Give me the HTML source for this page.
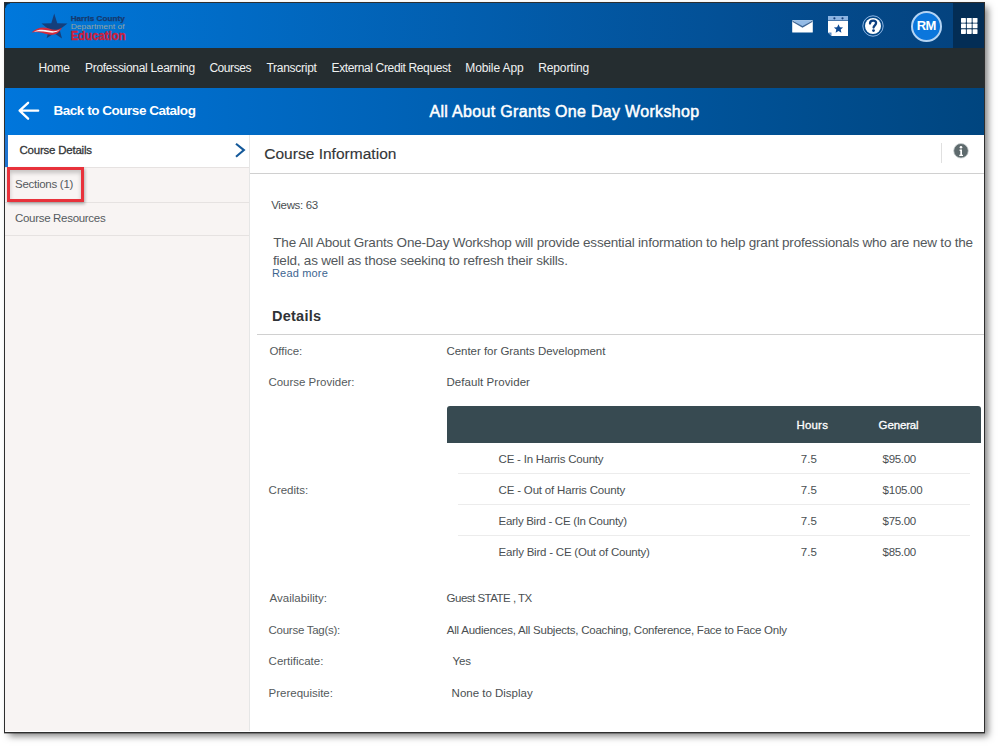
<!DOCTYPE html>
<html><head><meta charset="utf-8"><style>
html,body{margin:0;padding:0;}
body{width:999px;height:748px;overflow:hidden;background:#fff;position:relative;font-family:"Liberation Sans",sans-serif;}
.a{position:absolute;}
.t{position:absolute;white-space:nowrap;font-family:"Liberation Sans",sans-serif;}
</style></head><body>
<!-- frame shadow -->
<div class="a" style="left:4px;top:2px;width:981px;height:731px;box-shadow:4px 4px 7px -1px rgba(0,0,0,0.5);background:#fff"></div>
<!-- header -->
<div class="a" style="left:5px;top:3px;width:948px;height:45px;background:linear-gradient(90deg,#0078dc,#04437f)"></div>
<div class="a" style="left:953px;top:3px;width:31px;height:45px;background:#032d55"></div>
<div class="a" style="left:5px;top:3px;width:5px;height:5px;background:radial-gradient(circle at 100% 100%, rgba(0,0,0,0) 3.5px, rgba(10,20,30,0.75) 5px)"></div>
<!-- nav -->
<div class="a" style="left:5px;top:48px;width:979px;height:40px;background:#252d30"></div>
<!-- blue bar -->
<div class="a" style="left:5px;top:88px;width:979px;height:47px;background:linear-gradient(90deg,#0076dc,#00457f)"></div>
<!-- sidebar -->
<div class="a" style="left:5px;top:135px;width:244px;height:596px;background:#f8f4f3"></div>
<div class="a" style="left:5px;top:135px;width:244px;height:32px;background:#fff"></div>
<div class="a" style="left:5px;top:135px;width:3px;height:32px;background:#1f74d0"></div>
<div class="a" style="left:5px;top:167px;width:244px;height:1px;background:#e6e2e1"></div>
<div class="a" style="left:5px;top:202px;width:244px;height:1px;background:#e6e2e1"></div>
<div class="a" style="left:5px;top:235px;width:244px;height:1px;background:#e6e2e1"></div>
<div class="a" style="left:249px;top:135px;width:1px;height:596px;background:#e6e6e6"></div>
<!-- chevron -->
<svg class="a" style="left:232px;top:142px" width="16" height="18" viewBox="0 0 16 18"><path d="M4 1.7 L11.9 8.1 L4 14.7" fill="none" stroke="#14599a" stroke-width="2.1"/></svg>
<!-- red highlight box -->
<div class="a" style="left:7px;top:166.5px;width:70.5px;height:29.5px;border:3px solid #e8323b;box-shadow:1px 2px 3px rgba(0,0,0,0.3), inset 0 3px 4px rgba(0,0,0,0.2)"></div>
<!-- main header -->
<div class="a" style="left:250px;top:173px;width:734px;height:1px;background:#d0d0d0"></div>
<div class="a" style="left:941px;top:143px;width:1px;height:20px;background:#e0e0e0"></div>
<svg class="a" style="left:953px;top:143px" width="16" height="16" viewBox="0 0 16 16"><circle cx="8" cy="7.8" r="7.3" fill="#5e6a6d" stroke="#c9cfd0" stroke-width="0.8"/><circle cx="8" cy="4.3" r="1.3" fill="#fff"/><path d="M6.6 6.6h2.4v5.2h1v1.3H6.3v-1.3h1V7.9h-0.7z" fill="#fff"/></svg>
<!-- details line -->
<div class="a" style="left:257px;top:334px;width:727px;height:1px;background:#d0d0d0"></div>
<!-- table header -->
<div class="a" style="left:447px;top:406px;width:534px;height:37px;background:#374a51;border-radius:3px 3px 0 0"></div>
<div class="a" style="left:458px;top:473px;width:512px;height:1px;background:#ececec"></div>
<div class="a" style="left:458px;top:504px;width:512px;height:1px;background:#ececec"></div>
<div class="a" style="left:458px;top:535px;width:512px;height:1px;background:#ececec"></div>
<!-- paragraph line 2 clipped -->
<div class="a" style="left:273px;top:250px;width:700px;height:16px;overflow:hidden">
<div class="t" style="left:0px;top:4px;font-size:13.5px;line-height:13.5px;letter-spacing:-0.204px;color:#53585b">field, as well as those seeking to refresh their skills.</div>
</div>
<!-- frame border overlay -->
<div class="a" style="left:4px;top:2px;width:979px;height:729px;border:1px solid #2e2e2e;"></div><div class="a" style="left:5px;top:731px;width:979px;height:1px;background:#fff"></div><div class="a" style="left:4px;top:733px;width:981px;height:1px;background:rgba(40,40,40,0.35)"></div>
<!-- back arrow -->
<svg class="a" style="left:16px;top:100px" width="26" height="22" viewBox="0 0 26 22"><path d="M3.6 10.7 H22.2 M12.1 2.8 L3.6 10.7 L12.1 18.7" fill="none" stroke="#fff" stroke-width="2.3" stroke-linecap="round" stroke-linejoin="round"/></svg>
<!-- logo -->
<svg class="a" style="left:28px;top:10px" width="100" height="34" viewBox="0 0 100 34">
 <path d="M26.2 3.5 L29.3 13.2 L39.5 13.6 L31.6 19.6 L34 28.5 L26.2 23.3 L18.6 28.2 L21 19.6 L13.5 13.6 L23.3 13.2 Z" fill="#143f7c"/>
 <path d="M3.5 22.5 C9 17.5 15 16.5 21 18.5 C26 20.5 30 20.2 34 17.5 C31 23.5 27 25.5 21 24.5 C14 23 9 21 3.5 22.5 Z" fill="#d32a3c"/>
 <path d="M5.5 21.8 C10 19.3 15 19.2 20.5 20.6 C25.5 21.8 29 21.5 32 19.6 C29.5 22.4 26 23.2 20.5 22.3 C15 21.3 10 20.8 5.5 21.8 Z" fill="#f4f4f6"/>
 <text x="42.7" y="11" font-family="Liberation Sans" font-weight="700" font-size="7.6" fill="#163a70" stroke="#163a70" stroke-width="0.25" textLength="54" lengthAdjust="spacingAndGlyphs">Harris County</text>
 <text x="42.7" y="19.3" font-family="Liberation Sans" font-size="7.6" fill="#95a3a0" textLength="54" lengthAdjust="spacingAndGlyphs">Department of</text>
 <text x="42.7" y="30" font-family="Liberation Sans" font-weight="700" font-size="12" fill="#cc1f3c" stroke="#cc1f3c" stroke-width="0.45" textLength="55" lengthAdjust="spacingAndGlyphs">Education</text>
</svg>
<!-- envelope -->
<svg class="a" style="left:792px;top:19px" width="21" height="15" viewBox="0 0 21 15"><rect x="0.2" y="1.2" width="20.6" height="12.3" rx="0.6" fill="#fff"/><path d="M0.8 1.2 H20.2 L10.5 7.9 Z" fill="#94bbe6"/><path d="M0.6 2.2 L10.5 7.9 L20.4 2.2" fill="none" stroke="#3f6796" stroke-width="1.3"/></svg>
<!-- calendar -->
<svg class="a" style="left:828px;top:16px" width="21" height="20" viewBox="0 0 21 20"><path d="M0 0 H20 V20 H3.5 L0 16.5 Z" fill="#fff"/><rect x="0" y="0" width="20" height="4.2" fill="#8cb4e2"/><rect x="0" y="4" width="20" height="1" fill="#4a78ac"/><circle cx="6.4" cy="2.3" r="1.1" fill="#163f7a"/><circle cx="14.5" cy="2.3" r="1.1" fill="#163f7a"/><path d="M10.5 8.2 L11.9 11.2 L15.1 11.5 L12.7 13.6 L13.4 16.8 L10.5 15.1 L7.6 16.8 L8.3 13.6 L5.9 11.5 L9.1 11.2 Z" fill="#0d4a94"/><path d="M0 16.5 L3.5 20 L3.5 16.5 Z" fill="#5b8cc6"/></svg>
<!-- help -->
<svg class="a" style="left:862px;top:15px" width="22" height="22" viewBox="0 0 22 22"><circle cx="11" cy="11" r="10.2" fill="none" stroke="#8cb4e2" stroke-width="1"/><circle cx="11" cy="11" r="8" fill="#fff"/><path d="M8 8.6 C8 6.4 9.4 5.6 11.1 5.6 C12.9 5.6 14.1 6.6 14.1 8.1 C14.1 10.2 11.6 10.4 11.6 12.6" fill="none" stroke="#0d3f80" stroke-width="2.3" stroke-linecap="round"/><circle cx="11.5" cy="15.6" r="1.4" fill="#0d3f80"/></svg>
<!-- avatar -->
<div class="a" style="left:910.6px;top:10.8px;width:27.2px;height:27.2px;border-radius:50%;background:#0b76dc;border:2px solid #b4d4f4"></div>
<div class="t" style="left:916.7px;top:19px;font-weight:700;font-size:13px;line-height:13px;letter-spacing:-0.6px;color:#fff">RM</div>
<!-- grid -->
<svg class="a" style="left:961px;top:18px" width="17" height="16" viewBox="0 0 17 16"><g fill="#fff"><rect x="0" y="0" width="4.9" height="4.7" rx="0.6"/><rect x="5.8" y="0" width="4.9" height="4.7" rx="0.6"/><rect x="11.6" y="0" width="4.9" height="4.7" rx="0.6"/>
<rect x="0" y="5.6" width="4.9" height="4.7" rx="0.6"/><rect x="5.8" y="5.6" width="4.9" height="4.7" rx="0.6"/><rect x="11.6" y="5.6" width="4.9" height="4.7" rx="0.6"/>
<rect x="0" y="11.2" width="4.9" height="4.7" rx="0.6"/><rect x="5.8" y="11.2" width="4.9" height="4.7" rx="0.6"/><rect x="11.6" y="11.2" width="4.9" height="4.7" rx="0.6"/></g></svg>

<div class="t" style="left:38.50px;top:62.00px;font-weight:400;font-size:12px;line-height:12px;letter-spacing:-0.167px;color:#f0f2f2">Home</div>
<div class="t" style="left:85.00px;top:62.00px;font-weight:400;font-size:12px;line-height:12px;letter-spacing:-0.3px;color:#f0f2f2">Professional Learning</div>
<div class="t" style="left:209.40px;top:62.00px;font-weight:400;font-size:12px;line-height:12px;letter-spacing:-0.433px;color:#f0f2f2">Courses</div>
<div class="t" style="left:266.50px;top:62.00px;font-weight:400;font-size:12px;line-height:12px;letter-spacing:-0.278px;color:#f0f2f2">Transcript</div>
<div class="t" style="left:331.50px;top:62.00px;font-weight:400;font-size:12px;line-height:12px;letter-spacing:-0.359px;color:#f0f2f2">External Credit Request</div>
<div class="t" style="left:465.30px;top:62.00px;font-weight:400;font-size:12px;line-height:12px;letter-spacing:-0.111px;color:#f0f2f2">Mobile App</div>
<div class="t" style="left:538.20px;top:62.00px;font-weight:400;font-size:12px;line-height:12px;letter-spacing:-0.125px;color:#f0f2f2">Reporting</div>
<div class="t" style="left:53.50px;top:104.00px;font-weight:700;font-size:13.5px;line-height:13.5px;letter-spacing:-0.471px;color:#ffffff">Back to Course Catalog</div>
<div class="t" style="left:429.50px;top:104.00px;-webkit-text-stroke:0.5px #ffffff;font-weight:400;font-size:16px;line-height:16px;letter-spacing:0.319px;color:#ffffff">All About Grants One Day Workshop</div>
<div class="t" style="left:19.50px;top:145.00px;-webkit-text-stroke:0.3px #333638;font-weight:400;font-size:11.5px;line-height:11.5px;letter-spacing:-0.223px;color:#333638">Course Details</div>
<div class="t" style="left:15.00px;top:179.00px;font-weight:400;font-size:11.5px;line-height:11.5px;letter-spacing:-0.273px;color:#555a5e">Sections (1)</div>
<div class="t" style="left:15.00px;top:213.00px;font-weight:400;font-size:11.5px;line-height:11.5px;letter-spacing:-0.307px;color:#555a5e">Course Resources</div>
<div class="t" style="left:264.20px;top:146.00px;-webkit-text-stroke:0.15px #333638;font-weight:400;font-size:15.5px;line-height:15.5px;letter-spacing:0.024px;color:#333638">Course Information</div>
<div class="t" style="left:271.20px;top:200.00px;font-weight:400;font-size:11.5px;line-height:11.5px;letter-spacing:-0.325px;color:#4a4f52">Views: 63</div>
<div class="t" style="left:273.30px;top:236.00px;font-weight:400;font-size:13.5px;line-height:13.5px;letter-spacing:-0.204px;color:#53585b">The All About Grants One-Day Workshop will provide essential information to help grant professionals who are new to the</div>
<div class="t" style="left:272.00px;top:268.00px;font-weight:400;font-size:11px;line-height:11px;letter-spacing:0.175px;color:#3d6590">Read more</div>
<div class="t" style="left:272.00px;top:309.00px;font-weight:700;font-size:14.5px;line-height:14.5px;letter-spacing:0.25px;color:#2f3336">Details</div>
<div class="t" style="left:269.40px;top:346.00px;font-weight:400;font-size:11.5px;line-height:11.5px;letter-spacing:-0.017px;color:#555a5c">Office:</div>
<div class="t" style="left:446.40px;top:346.00px;font-weight:400;font-size:11.5px;line-height:11.5px;letter-spacing:-0.029px;color:#4a4f52">Center for Grants Development</div>
<div class="t" style="left:268.40px;top:377.00px;font-weight:400;font-size:11.5px;line-height:11.5px;letter-spacing:-0.007px;color:#555a5c">Course Provider:</div>
<div class="t" style="left:446.40px;top:377.00px;font-weight:400;font-size:11.5px;line-height:11.5px;letter-spacing:0.073px;color:#4a4f52">Default Provider</div>
<div class="t" style="left:268.60px;top:485.00px;font-weight:400;font-size:11.5px;line-height:11.5px;letter-spacing:-0.014px;color:#555a5c">Credits:</div>
<div class="t" style="left:269.60px;top:593.00px;font-weight:400;font-size:11.5px;line-height:11.5px;letter-spacing:0.0px;color:#555a5c">Availability:</div>
<div class="t" style="left:446.60px;top:593.00px;font-weight:400;font-size:11.5px;line-height:11.5px;letter-spacing:-0.507px;color:#4a4f52">Guest STATE , TX</div>
<div class="t" style="left:268.60px;top:625.00px;font-weight:400;font-size:11.5px;line-height:11.5px;letter-spacing:-0.277px;color:#555a5c">Course Tag(s):</div>
<div class="t" style="left:446.80px;top:625.00px;font-weight:400;font-size:11.5px;line-height:11.5px;letter-spacing:-0.236px;color:#4a4f52">All Audiences, All Subjects, Coaching, Conference, Face to Face Only</div>
<div class="t" style="left:268.60px;top:656.00px;font-weight:400;font-size:11.5px;line-height:11.5px;letter-spacing:-0.018px;color:#555a5c">Certificate:</div>
<div class="t" style="left:452.60px;top:656.00px;font-weight:400;font-size:11.5px;line-height:11.5px;letter-spacing:-0.15px;color:#4a4f52">Yes</div>
<div class="t" style="left:268.60px;top:688.00px;font-weight:400;font-size:11.5px;line-height:11.5px;letter-spacing:-0.017px;color:#555a5c">Prerequisite:</div>
<div class="t" style="left:451.60px;top:688.00px;font-weight:400;font-size:11.5px;line-height:11.5px;letter-spacing:-0.007px;color:#4a4f52">None to Display</div>
<div class="t" style="left:796.50px;top:420.00px;-webkit-text-stroke:0.3px #ffffff;font-weight:400;font-size:11.5px;line-height:11.5px;letter-spacing:0.175px;color:#ffffff">Hours</div>
<div class="t" style="left:878.60px;top:420.00px;-webkit-text-stroke:0.3px #ffffff;font-weight:400;font-size:11.5px;line-height:11.5px;letter-spacing:-0.15px;color:#ffffff">General</div>
<div class="t" style="left:498.60px;top:454.00px;font-weight:400;font-size:11.5px;line-height:11.5px;letter-spacing:-0.215px;color:#4a4f52">CE - In Harris County</div>
<div class="t" style="left:498.60px;top:485.00px;font-weight:400;font-size:11.5px;line-height:11.5px;letter-spacing:-0.183px;color:#4a4f52">CE - Out of Harris County</div>
<div class="t" style="left:498.60px;top:516.00px;font-weight:400;font-size:11.5px;line-height:11.5px;letter-spacing:-0.292px;color:#4a4f52">Early Bird - CE (In County)</div>
<div class="t" style="left:498.60px;top:547.00px;font-weight:400;font-size:11.5px;line-height:11.5px;letter-spacing:-0.22px;color:#4a4f52">Early Bird - CE (Out of County)</div>
<div class="t" style="left:800.80px;top:454.00px;font-weight:400;font-size:11.5px;line-height:11.5px;letter-spacing:0.1px;color:#4a4f52">7.5</div>
<div class="t" style="left:800.80px;top:485.00px;font-weight:400;font-size:11.5px;line-height:11.5px;letter-spacing:0.1px;color:#4a4f52">7.5</div>
<div class="t" style="left:800.80px;top:516.00px;font-weight:400;font-size:11.5px;line-height:11.5px;letter-spacing:0.1px;color:#4a4f52">7.5</div>
<div class="t" style="left:800.80px;top:547.00px;font-weight:400;font-size:11.5px;line-height:11.5px;letter-spacing:0.1px;color:#4a4f52">7.5</div>
<div class="t" style="left:882.60px;top:454.00px;font-weight:400;font-size:11.5px;line-height:11.5px;letter-spacing:-0.32px;color:#4a4f52">$95.00</div>
<div class="t" style="left:882.60px;top:485.00px;font-weight:400;font-size:11.5px;line-height:11.5px;letter-spacing:-0.25px;color:#4a4f52">$105.00</div>
<div class="t" style="left:882.60px;top:516.00px;font-weight:400;font-size:11.5px;line-height:11.5px;letter-spacing:-0.32px;color:#4a4f52">$75.00</div>
<div class="t" style="left:882.60px;top:547.00px;font-weight:400;font-size:11.5px;line-height:11.5px;letter-spacing:-0.32px;color:#4a4f52">$85.00</div>
</body></html>
